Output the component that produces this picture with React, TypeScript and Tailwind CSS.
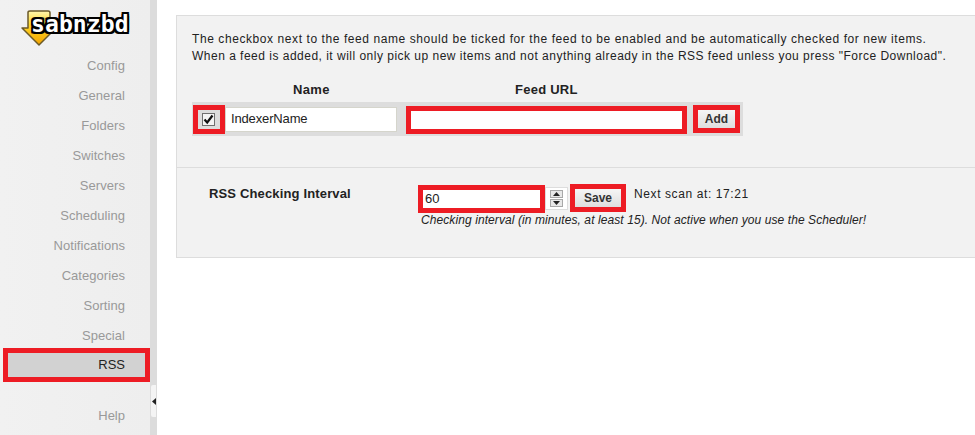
const navItems = ["Config", "General", "Folders", "Switches", "Servers", "Scheduling", "Notifications", "Categories", "Sorting", "Special"];

const font = "font-['Liberation_Sans',Arial,sans-serif]";

function Logo() {
  return (
    <div className="relative h-[51px] w-full">
      <svg className="absolute left-[20px] top-[9px]" width="44" height="38" viewBox="0 0 44 38">
        <defs>
          <linearGradient id="arrowFill" x1="0" y1="0" x2="0" y2="1">
            <stop offset="0" stopColor="#fff6b0" />
            <stop offset="0.4" stopColor="#ffd92a" />
            <stop offset="1" stopColor="#f2a200" />
          </linearGradient>
        </defs>
        <path d="M8 3.5 Q8 2 10 2 H28 Q30 2 30 4 V19 H36 L19 36 L2 19 H8 Z" fill="url(#arrowFill)" stroke="#6b5a28" strokeWidth="1.5" strokeLinejoin="round" />
      </svg>
      <span className="absolute left-[31px] top-[15px] text-[23px] leading-[19px] font-bold tracking-[0.1px] text-white font-['DejaVu_Sans_Mono',monospace] [text-shadow:2px_0_0_#000,-2px_0_0_#000,0_2px_0_#000,0_-2px_0_#000,2px_2px_0_#000,-2px_2px_0_#000,2px_-2px_0_#000,-2px_-2px_0_#000]">
        sabnzbd
      </span>
    </div>
  );
}

function Sidebar() {
  return (
    <aside className="flex h-[435px] w-[157px] shrink-0 bg-[#efefef]">
      <div className="flex w-[150px] flex-col bg-[linear-gradient(to_right,#f1f1f1,#eeeeee)]">
        <Logo />
        <nav className="flex flex-col">
          {navItems.map((item) => (
            <div key={item} className="h-[30px] pr-[25px] text-right text-[13px] leading-[30px] tracking-[0.05px] text-[#999999]">
              {item}
            </div>
          ))}
          <div className="-mt-[3px] ml-[3px] h-[34px] w-[147px] border-[5px] border-[#ed1c24] bg-[#d2d2d2] pr-[20px] text-right text-[13px] leading-[24px] text-[#222222]">
            RSS
          </div>
          <div className="mt-[19px] h-[30px] pr-[25px] text-right text-[13px] leading-[30px] text-[#999999]">Help</div>
        </nav>
      </div>
      <div className="flex w-[7px] flex-col items-center justify-end bg-[#dcdcdc] pb-[18px]">
        <div className="flex h-[32px] w-[5px] items-center justify-center rounded-l-[2px] bg-[#f4f4f4]">
          <svg width="4" height="7" viewBox="0 0 4 7">
            <path d="M4 0 V7 L0 3.5 Z" fill="#222222" />
          </svg>
        </div>
      </div>
    </aside>
  );
}

function FeedRow() {
  return (
    <div className="ml-[15px] flex h-[34px] w-[551px] items-center bg-[#dddddd]">
      <div className="ml-[1px] flex h-[29px] w-[32px] items-center justify-center border-[5px] border-[#ed1c24] bg-[#dddddd]">
        <div className="-ml-[1px] flex h-[13px] w-[13px] items-center justify-center border border-[#707070] bg-[#f4f4f4]">
          <svg width="11" height="11" viewBox="0 0 11 11">
            <path d="M1.5 5.5 L4.2 8.5 L9.5 1.5" fill="none" stroke="#111111" strokeWidth="2.2" />
          </svg>
        </div>
      </div>
      <div className="h-[25px] w-[172px] border border-[#d5d5cc] bg-white pl-[5px] text-[13px] leading-[22px] tracking-[-0.15px] text-[#222222]">
        IndexerName
      </div>
      <div className="ml-[9px] mt-[1px] h-[28px] w-[281px] border-[5px] border-[#ed1c24] bg-white" />
      <div className="ml-[6px] flex h-[28px] w-[47px] border-[5px] border-[#ed1c24]">
        <div className="flex-1 bg-[linear-gradient(to_bottom,#f5f5f5,#dedede)] text-center text-[12px] leading-[18px] font-bold text-[#333333]">
          Add
        </div>
      </div>
    </div>
  );
}

function SpinButton({ up }: { up: boolean }) {
  return (
    <div className="flex h-[8px] w-[13px] items-center justify-center border border-[#a8a8a8] bg-[#e8e8e8]">
      <svg width="7" height="4" viewBox="0 0 7 4">
        <path d={up ? "M0 4 H7 L3.5 0 Z" : "M0 0 H7 L3.5 4 Z"} fill="#222222" />
      </svg>
    </div>
  );
}

function IntervalRow() {
  return (
    <div className="flex pt-[16px]">
      <div className="ml-[32px] w-[209px] pt-[2px] text-[13px] leading-[16px] font-bold tracking-[0.15px] text-[#222222]">
        RSS Checking Interval
      </div>
      <div className="flex flex-col">
        <div className="flex">
          <div className="mt-[1px] h-[28px] w-[127px] border-[5px] border-[#ed1c24] bg-white pl-[2px] text-[13px] leading-[18px] text-[#222222]">
            60
          </div>
          <div className="mt-[3px] flex h-[23px] w-[23px] flex-col gap-[1px] border border-[#dddddd] bg-white pl-[4px] pt-[2px]">
            <SpinButton up />
            <SpinButton up={false} />
          </div>
          <div className="ml-[2px] h-[28px] w-[56px] border-[5px] border-[#ed1c24] bg-[linear-gradient(to_bottom,#f5f5f5,#dedede)] text-center text-[12px] leading-[18px] font-bold text-[#333333]">
            Save
          </div>
          <div className="ml-[8px] pt-[2px] text-[12px] leading-[16px] tracking-[0.6px] text-[#222222]">Next scan at: 17:21</div>
        </div>
        <div className="ml-[3px] text-[12px] leading-[14px] tracking-[0.085px] italic text-[#222222]">
          Checking interval (in minutes, at least 15). Not active when you use the Scheduler!
        </div>
      </div>
    </div>
  );
}

export default function App() {
  return (
    <div className={`flex h-[435px] w-[975px] overflow-hidden bg-white ${font}`}>
      <Sidebar />
      <main className="min-w-0 flex-1 pl-[19px] pt-[15px]">
        <div className="h-[243px] w-[820px] border border-[#dddddd] bg-[#f2f2f2]">
          <div className="h-[152px] border-b border-[#dddddd]">
            <div className="pl-[15px] pt-[15px] text-[12px] leading-[17px] whitespace-nowrap text-[#222222]">
              <p className="tracking-[0.58px]">
                The checkbox next to the feed name should be ticked for the feed to be enabled and be automatically checked for new items.
              </p>
              <p className="tracking-[0.49px]">
                When a feed is added, it will only pick up new items and not anything already in the RSS feed unless you press "Force Download".
              </p>
            </div>
            <div className="flex h-[33px] items-end text-[13px] leading-[16px] font-bold text-[#222222]">
              <span className="ml-[116px] w-[222px] tracking-[0.35px]">Name</span>
              <span className="tracking-[0.25px]">Feed URL</span>
            </div>
            <div className="mt-[4px]"><FeedRow /></div>
          </div>
          <IntervalRow />
        </div>
      </main>
    </div>
  );
}
